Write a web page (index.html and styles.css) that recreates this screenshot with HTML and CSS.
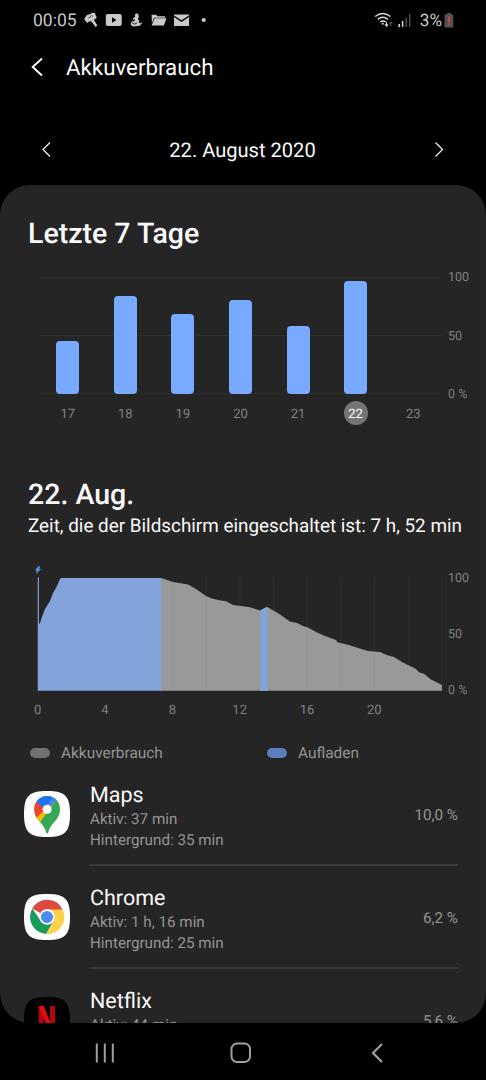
FILE: index.html
```html
<!DOCTYPE html>
<html lang="de">
<head>
<meta charset="utf-8">
<title>Akkuverbrauch</title>
<link rel="stylesheet" href="styles.css">
</head>
<body>
<div class="screen">
  <div class="status">
    <span class="clock">00:05</span>
    <svg class="notif" width="125" height="18" viewBox="84 11 125 18" fill="#c9c9c9">
      <path d="M84.300 18.500l2.700-3.500 3.500-1 1.500-1.200 3 .2.700 2.500 1.100 2-1.800 1.700-1.200.3 3.500 6-1.700 1.500-4.400-5.700-2.400.2-1.400 1.400-2.400-2.500z"/>
      <path d="M88.500 18l2.500-1.500M91.500 15l1 1.600" stroke="#000" stroke-width=".7"/>
      <path fill-rule="evenodd" d="M107.800 14h11.900q2 0 2 2v8q0 2-2 2h-11.900q-2 0-2-2v-8q0-2 2-2zM112 17.300v5.400l4.500-2.700z"/>
      <path d="M135 14.200l1.700-1 1.700 1 .4 3-.9 1.800 1.500 2-.7 1.700 1.800.6 1.200-1.400.3 1.200-2.200 2.700-4 .4-3 .2-2.200-1.800.8-3.200 3.100-.7.300-1.500-1.700.2-.3-1.200 2.400-1.500z"/>
      <path d="M131.800 22.500l2.700 1.700 2.500-1.300M133.600 21.500h.8" fill="none" stroke="#000" stroke-width=".8"/>
      <path d="M151.600 14.700h4.400l1.500 1.600h7.500v1.400h-11l-2.100 5.500z"/>
      <path d="M154.700 18.300h11.800l-2.600 7.200h-12.300z"/>
      <path d="M174 14.400h15v1.100l-7.500 4.700-7.500-4.700z"/>
      <path d="M174 17.100l7.500 4.800 7.500-4.800v9h-15z"/>
      <circle cx="203.700" cy="20" r="2.100"/>
    </svg>
    <svg class="signal" width="40" height="18" viewBox="371 11 40 18" fill="none" stroke="#d8d8d8" stroke-width="1.500">
      <path d="M373.200 16.500q7.600-5.800 15.200 0M375.700 19.300q5.100-4 10.200 0M378.300 22q2.700-2 5.300 0"/>
      <circle cx="380.800" cy="23.700" r=".7" fill="#d8d8d8" stroke-width=".8"/>
      <path d="M384.500 22v4M382.900 24.400l1.600 1.700 1.600-1.700" stroke-width="1.100"/>
      <path d="M388.800 26v-4M387.300 23.700l1.500-1.700 1.500 1.700" stroke="#666" stroke-width="1"/>
      <path d="M397.200 27v-3M400.600 27v-6"/>
      <path d="M404.100 27V17.500M407.700 27V14" stroke="#555" stroke-width="1.300"/>
    </svg>
    <span class="percent">3%</span>
    <svg width="10" height="15" viewBox="0 0 10 15"><path d="M3 0h4v1.500h2.300v13H.5v-13H3z" fill="#57504e"/><path d="M5 3.500v5.700M5 10.500v1.600" stroke="#dc5145" stroke-width="1.500"/></svg>
  </div>

  <header class="title-bar">
    <svg width="14" height="20" viewBox="0 0 14 20"><path d="M12 1.500L2.700 10l9.300 8.500" fill="none" stroke="#fff" stroke-width="1.900"/></svg>
    <h1>Akkuverbrauch</h1>
  </header>

  <nav class="date-nav">
    <svg width="10" height="16" viewBox="0 0 10 16"><path d="M9 .500L2 7.500l7 7" fill="none" stroke="#eee" stroke-width="1.300"/></svg>
    <span>22. August 2020</span>
    <svg width="10" height="16" viewBox="0 0 10 16"><path d="M1.500 .500l7 7-7 7" fill="none" stroke="#eee" stroke-width="1.300"/></svg>
  </nav>

  <main class="card">
    <h2 class="week-title">Letzte 7 Tage</h2>
    <section class="week">
      <div class="week-plot">
        <div class="bar" style="height:53px"></div>
        <div class="bar" style="height:98px"></div>
        <div class="bar" style="height:80px"></div>
        <div class="bar" style="height:94px"></div>
        <div class="bar" style="height:68px"></div>
        <div class="bar" style="height:113px"></div>
        <div></div>
      </div>
      <div class="scale"><span>100</span><span>50</span><span>0 %</span></div>
    </section>
    <div class="days"><span>17</span><span>18</span><span>19</span><span>20</span><span>21</span><span class="selected">22</span><span>23</span></div>

    <h2 class="day-title">22. Aug.</h2>
    <p class="screen-time">Zeit, die der Bildschirm eingeschaltet ist: 7 h, 52 min</p>

    <section class="day">
      <svg width="410" height="126" viewBox="34 565 410 126">
        <path d="M71.700 577v114M105.300 577v114M139 577v114M172.700 577v114M206.300 577v114M240 577v114M273.700 577v114M307.300 577v114M341 577v114M374.700 577v114M408.600 577v114M442 577v114" stroke="#2f2f2f" stroke-width="1"/>
        <path d="M161 690.700V578L166 579.500 173 582 188 584.500 196 589 206 596 212 598.500 218 600 226 601.300 233 605 241 606 250 607.300 260 610.500 267 607 277 612.500 290 621.500 297 623 304 626.500 308 627.500 317 632.500 325 636 336 640 337.500 642.200 348 644.700 359 648.300 368 651 380 652 388 655.500 394 657 402 662 416 669 419 672.300 424 673.700 431 679.500 442 685V690.700z" fill="#999"/>
        <path d="M38 690.700V625l2-2 2-6 3-8 5-8 3-8 3-5 4.500-10H161.500V690.700zM260.200 690.700V610.500L266 607.300h1.700V690.700z" fill="#83a4da"/>
        <path d="M173 583v107M206.500 597v93M307.500 628v62M341 643v47M374.500 652v38" stroke="#939393"/>
        <path d="M38.300 577.500v113" stroke="#83a4da" stroke-width="1.200"/>
        <path d="M38.800 566l-3.500 4.200h1.900l-.8 3.500 4.300-4.700h-2l1.200-2.500z" fill="#568ee8" stroke="#568ee8" stroke-width=".5"/>
      </svg>
      <div class="scale"><span>100</span><span>50</span><span>0 %</span></div>
    </section>
    <div class="hours"><span>0</span><span>4</span><span>8</span><span>12</span><span>16</span><span>20</span></div>
    <div class="legend">
      <div><i class="swatch"></i>Akkuverbrauch</div>
      <div><i class="swatch charging"></i>Aufladen</div>
    </div>

    <div class="apps">
      <div class="app">
        <svg class="icon" width="46" height="46" viewBox="0 0 46 46">
          <defs><clipPath id="pin"><path d="M23.200 5c7.300 0 12.800 5.600 12.800 13 0 7.500-3.600 10.500-7.200 14.800-2.500 3-4 6-4.500 8.600-.4 1.500-1.800 1.500-2.200 0-.6-2.600-2.100-5.600-4.500-8.600C14 28.500 10.300 25.500 10.300 18c0-7.400 5.600-13 12.900-13z"/></clipPath></defs>
          <path d="M23 0C41 0 46 5 46 23S41 46 23 46 0 41 0 23 5 0 23 0z" fill="#fff"/>
          <g clip-path="url(#pin)">
            <path fill="#34a853" d="M5 0h36v46H5z"/>
            <path fill="#fbbc04" d="M31.700 9.700L15.300 32.300 5 46V10z"/>
            <path fill="#ea4335" d="M5 4l7 6.700 10 7L8.500 30.500 0 32z"/>
            <path fill="#1a73e8" d="M12 10.700l10 8L32.500 9 34 0H5z"/>
            <path fill="#4285f4" d="M20 17.500L29.500 5H36l-3.500 4-9 10z"/>
          </g>
          <circle cx="23.100" cy="18.200" r="4.500" fill="#fff"/>
        </svg>
        <div class="app-body"><div class="app-text"><h3>Maps</h3><p>Aktiv: 37 min</p><p>Hintergrund: 35 min</p></div><span class="usage">10,0 %</span></div>
      </div>
      <div class="app">
        <svg class="icon" width="46" height="46" viewBox="0 0 46 46">
          <path d="M23 0C41 0 46 5 46 23S41 46 23 46 0 41 0 23 5 0 23 0z" fill="#fff"/>
          <path d="M23 23L8.300 14.500A17 17 0 0 1 38.600 15.500z" fill="#db4b3f"/>
          <path d="M23 15.500h15.600A17 17 0 0 1 22 40l7.500-13z" fill="#ffd04b"/>
          <path d="M8.300 14.500A17 17 0 0 0 22 40l7.500-13.200L23 23l-6.500 3.500z" fill="#179c5b"/>
          <circle cx="23" cy="23" r="7.700" fill="#fff"/><circle cx="23" cy="23" r="6.100" fill="#4c8bf5"/>
        </svg>
        <div class="app-body"><div class="app-text"><h3>Chrome</h3><p>Aktiv: 1 h, 16 min</p><p>Hintergrund: 25 min</p></div><span class="usage">6,2 %</span></div>
      </div>
      <div class="app">
        <svg class="icon" width="46" height="46" viewBox="0 0 46 46">
          <path d="M23 0C41 0 46 5 46 23S41 46 23 46 0 41 0 23 5 0 23 0z" fill="#000"/>
          <path d="M14.700 9h5v28h-5zM26 9h5v28h-5z" fill="#b20710"/><path d="M14.700 9h5L31 37h-5z" fill="#e50914"/>
        </svg>
        <div class="app-body"><div class="app-text"><h3>Netflix</h3><p>Aktiv: 44 min</p></div><span class="usage">5,6 %</span></div>
      </div>
    </div>
  </main>

  <footer class="nav-bar">
    <svg width="20" height="20" viewBox="0 0 20 20"><path d="M1.800.5v19M9.800.5v19M17.800.5v19" stroke="#a0a0a0" stroke-width="2"/></svg>
    <svg class="home" width="22" height="22" viewBox="0 0 22 22"><rect x="1.500" y="1.500" width="18.500" height="18.500" rx="5.500" fill="none" stroke="#a0a0a0" stroke-width="2"/></svg>
    <svg width="14" height="22" viewBox="0 0 14 22"><path d="M12 2L3 11l9 9" fill="none" stroke="#a0a0a0" stroke-width="2.200"/></svg>
  </footer>
</div>
</body>
</html>
```
FILE: styles.css
```css
* { box-sizing: border-box; margin: 0; padding: 0; }
body { background: #000; color: #fafafa; font-family: Roboto, sans-serif; text-rendering: geometricPrecision; }
h1, h2, h3 { font-weight: 400; }
svg { display: block; flex: none; }
.screen { width: 486px; height: 1080px; overflow: hidden; display: flex; flex-direction: column; }

.status { height: 40px; flex: none; display: flex; align-items: center; padding: 0 32px 0 33px; color: #c9c9c9; }
.clock { font-size: 17.500px; width: 51px; padding-top: 1px; }
.signal { margin-left: auto; }
.percent { font-size: 17.200px; margin: 1px 2px 0 7px; }

.title-bar { height: 55px; flex: none; display: flex; align-items: center; padding: 0 0 2px 30px; gap: 22px; }
.title-bar h1 { font-size: 22.300px; padding-top: 2px; }
.date-nav { height: 90px; flex: none; display: flex; align-items: center; justify-content: space-between; padding: 20px 42px 0 41px; font-size: 20.100px; }

.card { height: 838px; flex: none; overflow: hidden; border-radius: 30px; background: #252525; }
.week-title, .day-title { font-size: 28.500px; font-weight: 500; line-height: 36px; padding-left: 28px; }
.week-title { padding-top: 31px; }

.week { display: flex; padding: 25px 0 0 39px; }
.week-plot { width: 403px; height: 117px; display: grid; grid-template-columns: repeat(7, 1fr); align-items: end; justify-items: center; background: linear-gradient(#2e2e2e 1px, transparent 1px 58px, #2e2e2e 58px 59px, transparent 59px 116px, #2e2e2e 116px); }
.bar { width: 23px; border-radius: 4px; background: #78aaff; }
.scale { display: flex; flex-direction: column; justify-content: space-between; margin: -7px 0 -9px 6px; font-size: 12.500px; line-height: 16px; color: #808080; }
.days { display: grid; grid-template-columns: repeat(7, 1fr); width: 403px; height: 24px; margin: 7px 0 0 39px; justify-items: center; font-size: 13px; line-height: 24px; color: #808080; }
.days span { padding-top: 2px; line-height: 23px; }
.selected { width: 24px; height: 24px; border-radius: 50%; background: #757575; color: #fff; text-align: center; }

.day-title { padding-top: 52px; }
.screen-time { font-size: 18.850px; line-height: 24px; padding: 1px 0 0 28px; white-space: nowrap; }
.day { display: flex; padding: 27px 0 0 34px; }
.day .scale { margin: 6px 0 -8px 4px; }
.hours { display: grid; grid-template-columns: repeat(6, 1fr); width: 404px; margin: 12px 0 0 4px; text-align: center; font-size: 13px; line-height: 16px; color: #808080; }
.legend { display: grid; grid-template-columns: 237px 1fr; padding: 23px 0 0 30px; font-size: 15.400px; line-height: 22px; color: #949494; }
.legend div { display: flex; align-items: center; }
.swatch { width: 20px; height: 10px; border-radius: 5px; background: #727272; margin-right: 11px; }
.charging { background: #5b7fbd; }

.apps { margin-top: -1px; padding: 0 28px 0 24px; }
.app { height: 103px; display: flex; align-items: center; gap: 19px; }
.icon { margin-bottom: 2px; }
.app-body { flex: 1; height: 103px; display: flex; align-items: center; justify-content: space-between; padding: 3px 0 0 1px; border-bottom: 2px solid #393939; }
.app-text { height: 67px; }
.app h3 { font-size: 21.500px; line-height: 27px; }
.app p { font-size: 15.200px; line-height: 21px; color: #949494; }
.usage { font-size: 15.200px; color: #949494; }

.nav-bar { height: 57px; display: flex; align-items: center; justify-content: space-between; padding: 2px 102px 0 95px; }
.home { margin-right: 3px; }
```
